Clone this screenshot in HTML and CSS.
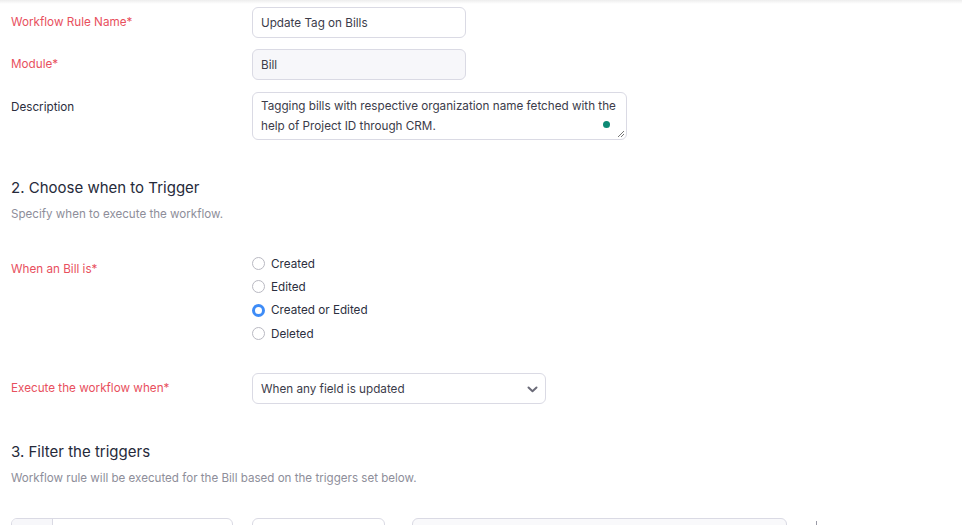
FILE: index.html
```html
<!DOCTYPE html>
<html>
<head>
<meta charset="utf-8">
<link rel="stylesheet" href="styles.css">
</head>
<body>
<div class="topshade"></div>
<div class="page">
  <div class="form-grid">
    <div class="label required">Workflow Rule Name*</div>
    <div class="field"><div class="input w-short">Update Tag on Bills</div></div>

    <div class="label required">Module*</div>
    <div class="field"><div class="input w-short disabled">Bill</div></div>

    <div class="label desc-label">Description</div>
    <div class="field desc-field">
      <div class="textarea">Tagging bills with respective organization name fetched with the help of Project ID through CRM.
        <span class="gdot"></span>
        <svg class="grip" width="9" height="9" viewBox="0 0 9 9"><path d="M8 2L2 8M8 5L5 8" stroke="#777" stroke-width="1" fill="none"/></svg>
      </div>
    </div>
  </div>

  <h2 class="section-title">2. Choose when to Trigger</h2>
  <p class="section-sub">Specify when to execute the workflow.</p>

  <div class="form-grid trigger-grid">
    <div class="label required radio-label">When an Bill is*</div>
    <div class="radios">
      <div class="radio-row"><span class="radio"></span>Created</div>
      <div class="radio-row"><span class="radio"></span>Edited</div>
      <div class="radio-row"><span class="radio checked"></span>Created or Edited</div>
      <div class="radio-row"><span class="radio"></span>Deleted</div>
    </div>
  </div>

  <div class="form-grid exec-grid">
    <div class="label required">Execute the workflow when*</div>
    <div class="field">
      <div class="input select">When any field is updated
        <svg class="chev" width="11" height="7" viewBox="0 0 11 7"><path d="M1.5 1.5L5.5 5.2L9.5 1.5" stroke="#6b6b78" stroke-width="2" fill="none" stroke-linecap="round" stroke-linejoin="round"/></svg>
      </div>
    </div>
  </div>

  <h2 class="section-title second">3. Filter the triggers</h2>
  <p class="section-sub">Workflow rule will be executed for the Bill based on the triggers set below.</p>

  <div class="filter-row">
    <div class="fbox fbox-1"><div class="fbox-prefix"></div></div>
    <div class="fbox fbox-2"></div>
    <div class="fbox fbox-3"></div>
    <div class="ftick"></div>
  </div>
</div>
</body>
</html>
```

FILE: styles.css
```css
html, body {
  margin: 0;
  padding: 0;
  background: #ffffff;
  overflow: hidden;
  height: 525px;
}
body {
  font-family: Inter, "Noto Sans", "Liberation Sans", sans-serif;
  font-size: 11.7px;
  color: #2b2e3e;
}
.topshade {
  position: absolute;
  left: 0;
  top: 0;
  width: 962px;
  height: 4px;
  background: linear-gradient(to bottom, rgba(0,0,0,0.07), rgba(0,0,0,0));
}
.page {
  padding: 7px 0 0 11px;
}
.form-grid {
  display: grid;
  grid-template-columns: 241px auto;
  row-gap: 11px;
  align-items: start;
}
.label {
  padding-top: 5px;
  line-height: 20px;
  font-size: 11.7px;
  color: #2b2e3e;
}
.label.required {
  color: #e8505e;
}
.desc-label {
  margin-top: 1px;
}
.desc-field {
  margin-top: 1px;
}
.input {
  box-sizing: border-box;
  height: 31px;
  border: 1px solid #dadae4;
  border-radius: 6px;
  padding: 1px 8px 0 8px;
  line-height: 28px;
  font-size: 11.7px;
  color: #3c3c4a;
  background: #fff;
}
.w-short {
  width: 214px;
}
.input.disabled {
  background: #f7f7fa;
}
.textarea {
  position: relative;
  box-sizing: border-box;
  width: 375px;
  height: 48px;
  border: 1px solid #dadae4;
  border-radius: 6px;
  padding: 3px 8px 0 8px;
  line-height: 20px;
  font-size: 11.7px;
  color: #3c3c4a;
}
.gdot {
  position: absolute;
  left: 350px;
  top: 28px;
  width: 7px;
  height: 7px;
  border-radius: 50%;
  background: #0d8a75;
}
.grip {
  position: absolute;
  right: 1px;
  bottom: 1px;
}
.section-title {
  margin: 37px 0 0 0;
  padding-top: 1px;
  height: 19px;
  font-size: 15px;
  font-weight: 400;
  line-height: 20px;
  color: #262a3a;
}
.section-sub {
  margin: 8px 0 0 0;
  padding-top: 1px;
  height: 15px;
  font-size: 11.6px;
  line-height: 16px;
  color: #8e8e9a;
}
.trigger-grid {
  margin-top: 31px;
}
.radio-label {
  padding-top: 7px;
}
.radios {
  display: flex;
  flex-direction: column;
}
.radio-row {
  height: 23.33px;
  display: flex;
  align-items: center;
  font-size: 11.7px;
  color: #2c2f40;
}
.radio {
  box-sizing: border-box;
  width: 13px;
  height: 13px;
  border-radius: 50%;
  border: 1px solid #b9b9c2;
  margin-right: 6px;
  background: #fff;
}
.radio.checked {
  border: 3.5px solid #3e8cf7;
}
.exec-grid {
  margin-top: 28px;
}
.select {
  position: relative;
  width: 294px;
}
.chev {
  position: absolute;
  right: 7px;
  top: 12px;
}
.section-title.second {
  margin-top: 37px;
}
.filter-row {
  display: flex;
  align-items: flex-start;
  margin-top: 33px;
}
.fbox {
  box-sizing: border-box;
  height: 31px;
  border: 1px solid #dadae4;
  border-radius: 6px;
  background: #fff;
}
.fbox-1 {
  width: 222px;
  overflow: hidden;
  display: flex;
}
.fbox-prefix {
  width: 40px;
  height: 100%;
  background: #f7f7fa;
  border-right: 1px solid #dadae4;
}
.fbox-2 {
  width: 133px;
  margin-left: 19px;
}
.fbox-3 {
  width: 375px;
  margin-left: 27px;
  background: #f9f9fb;
}
.ftick {
  width: 1px;
  height: 5px;
  margin-left: 29px;
  margin-top: 3px;
  background: #9a9aa6;
}
```
